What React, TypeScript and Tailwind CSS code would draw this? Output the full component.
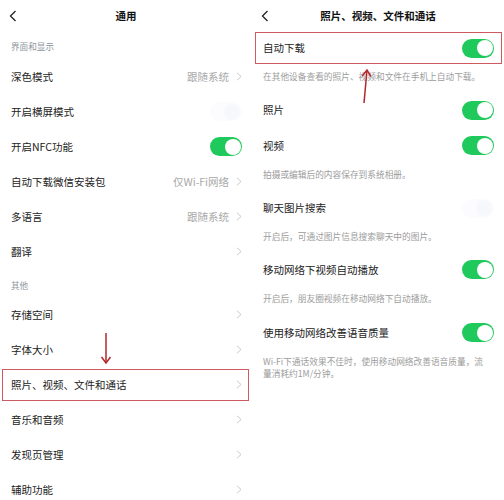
import React from "react";

const font = { fontFamily: '"Noto Sans CJK SC", "Noto Sans", sans-serif' };

function Chevron() {
  return (
    <svg width="6" height="9" viewBox="0 0 6 9" className="shrink-0">
      <polyline points="1,0.8 5,4.5 1,8.2" fill="none" stroke="#c8c8c8" strokeWidth="1" />
    </svg>
  );
}

function BackIcon() {
  return (
    <svg width="8" height="12" viewBox="0 0 8 12">
      <polyline points="6.5,1 1.5,6 6.5,11" fill="none" stroke="#222" strokeWidth="1.3" />
    </svg>
  );
}

function Toggle({ on = true }: { on?: boolean }) {
  return on ? (
    <div className="relative h-[19px] w-[32px] rounded-full bg-[#20c95c]">
      <div className="absolute right-[1.5px] top-[1.5px] h-[16px] w-[16px] rounded-full bg-white" />
    </div>
  ) : (
    <div className="relative h-[19px] w-[32px] rounded-full bg-[#fcfcfe]">
      <div className="absolute right-[2px] top-[1.5px] h-[16px] w-[16px] rounded-full bg-[#f6f8fc]" />
    </div>
  );
}

function Header({ title }: { title: string }) {
  return (
    <div className="relative flex h-[31px] items-center justify-center">
      <div className="absolute left-[9px] top-[10px]">
        <BackIcon />
      </div>
      <span className="text-[10.5px] font-semibold text-[#111]">{title}</span>
    </div>
  );
}

function Row({
  label,
  value,
  chevron,
  toggle,
  h = "h-[35px]",
}: {
  label: string;
  value?: string;
  chevron?: boolean;
  toggle?: "on" | "off";
  h?: string;
}) {
  return (
    <div className={`flex ${h} items-center justify-between pl-[11px] pr-[10px]`}>
      <span className="text-[10.5px] text-[#1c1c1c]">{label}</span>
      <div className="flex items-center gap-[7px]">
        {value && <span className="text-[10.5px] text-[#a8a8a8]">{value}</span>}
        {chevron && <Chevron />}
        {toggle && <Toggle on={toggle === "on"} />}
      </div>
    </div>
  );
}

function Label({ text, h, pt }: { text: string; h: string; pt: string }) {
  return (
    <div className={`${h} ${pt} pl-[11px] text-[8.6px] leading-[12px] text-[#8f969e]`}>{text}</div>
  );
}

function Desc({ children, h = "h-[27px]", pt = "pt-[6px]" }: { children: React.ReactNode; h?: string; pt?: string }) {
  return (
    <div className={`${h} ${pt} pl-[11px] pr-[10px] text-[8.7px] leading-[12px] text-[#9c9c9c]`}>{children}</div>
  );
}

function Boxed({ children, inset }: { children: React.ReactNode; inset: string }) {
  return (
    <div className="relative">
      {children}
      <div className={`pointer-events-none absolute ${inset} border-[1.5px] border-[#cc5a5e]`} />
    </div>
  );
}

function LeftPanel() {
  return (
    <div className="relative w-[252px] shrink-0">
      <Header title="通用" />
      <Label text="界面和显示" h="h-[28px]" pt="pt-[9px]" />
      <Row label="深色模式" value="跟随系统" chevron />
      <Row label="开启横屏模式" toggle="off" />
      <Row label="开启NFC功能" toggle="on" />
      <Row label="自动下载微信安装包" value="仅Wi-Fi网络" chevron />
      <Row label="多语言" value="跟随系统" chevron />
      <Row label="翻译" chevron />
      <Label text="其他" h="h-[28px]" pt="pt-[10px]" />
      <Row label="存储空间" chevron />
      <Row label="字体大小" chevron />
      <Boxed inset="left-[2px] right-[3px] top-[2px] bottom-[1px]">
        <Row label="照片、视频、文件和通话" chevron />
      </Boxed>
      <Row label="音乐和音频" chevron />
      <Row label="发现页管理" chevron />
      <Row label="辅助功能" chevron />
      <svg
        className="absolute left-[100px] top-[332px]"
        width="12"
        height="33"
        viewBox="0 0 12 33"
      >
        <line x1="6" y1="1" x2="6" y2="31" stroke="#b3262c" strokeWidth="1.5" />
        <polyline points="1.5,25 6,31 10.5,25" fill="none" stroke="#b3262c" strokeWidth="1.5" />
      </svg>
    </div>
  );
}

function RightPanel() {
  return (
    <div className="relative w-[252px] shrink-0">
      <Header title="照片、视频、文件和通话" />
      <Boxed inset="left-[3px] right-[2px] top-[1px] bottom-[1px]">
        <Row label="自动下载" toggle="on" h="h-[34px]" />
      </Boxed>
      <Desc>在其他设备查看的照片、视频和文件在手机上自动下载。</Desc>
      <Row label="照片" toggle="on" h="h-[36px]" />
      <Row label="视频" toggle="on" />
      <Desc>拍摄或编辑后的内容保存到系统相册。</Desc>
      <Row label="聊天图片搜索" toggle="off" h="h-[36px]" />
      <Desc h="h-[26px]" pt="pt-[5px]">开启后，可通过图片信息搜索聊天中的图片。</Desc>
      <Row label="移动网络下视频自动播放" toggle="on" />
      <Desc h="h-[28px]">开启后，朋友圈视频在移动网络下自动播放。</Desc>
      <Row label="使用移动网络改善语音质量" toggle="on" />
      <Desc h="h-[34px]">
        Wi-Fi下通话效果不佳时，使用移动网络改善语音质量，流
        <br />
        量消耗约1M/分钟。
      </Desc>
      <svg
        className="absolute left-[107px] top-[68px]"
        width="14"
        height="37"
        viewBox="0 0 14 37"
      >
        <line x1="8" y1="2" x2="5" y2="35" stroke="#b3262c" strokeWidth="1.5" />
        <polyline points="3.2,8 8,2 12,8.6" fill="none" stroke="#b3262c" strokeWidth="1.5" />
      </svg>
    </div>
  );
}

export default function App() {
  return (
    <div className="flex h-[500px] w-[504px] overflow-hidden bg-white" style={font}>
      <LeftPanel />
      <RightPanel />
    </div>
  );
}
